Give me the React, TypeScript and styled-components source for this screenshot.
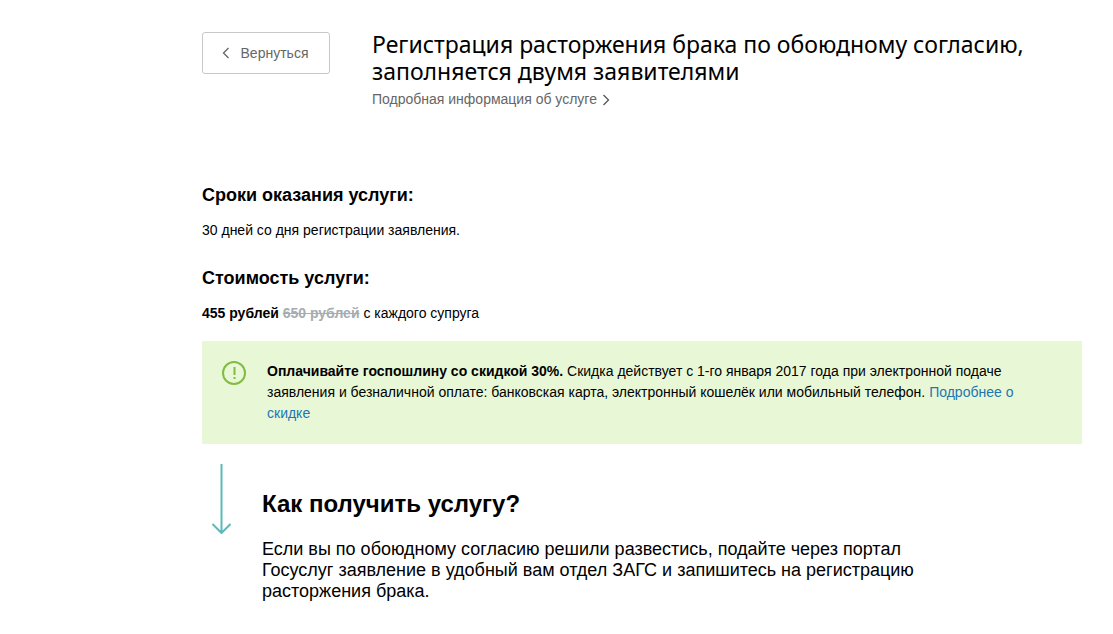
import React from 'react';
import styled, { createGlobalStyle } from 'styled-components';

const GlobalStyle = createGlobalStyle`
  * { box-sizing: border-box; }
  body {
    margin: 0;
    background: #fff;
    color: #000;
    font-family: "Liberation Sans", Arial, sans-serif;
    font-size: 14px;
    line-height: 21px;
  }
  h1, h2, p { margin: 0; }
`;

const Page = styled.div`
  padding: 31px 31px 32px 202px;
`;

const Header = styled.header`
  display: flex;
  align-items: flex-start;
  gap: 42px;
  margin-bottom: 74px;
`;

const BackButton = styled.button`
  flex: none;
  display: flex;
  align-items: center;
  justify-content: center;
  gap: 11px;
  width: 128px;
  height: 42px;
  margin-top: 1px;
  padding: 0 2px 0 0;
  border: 1px solid #c8c8c8;
  border-radius: 3px;
  background: #fff;
  color: #666;
  font: 14px "Liberation Sans", Arial, sans-serif;
  cursor: pointer;
`;

const Title = styled.h1`
  font: 400 23px/27px "Noto Sans", sans-serif;
`;

const InfoLink = styled.a`
  display: inline-flex;
  align-items: center;
  gap: 5px;
  margin-top: 4px;
  color: #666;
  text-decoration: none;
`;

const Section = styled.section`
  margin-bottom: 26px;
`;

const SectionTitle = styled.h2`
  margin-bottom: 14px;
  font-size: 18px;
  line-height: 22px;
`;

const OldPrice = styled.s`
  color: #a5adb2;
  font-weight: 700;
`;

const Notice = styled.aside`
  display: flex;
  gap: 21px;
  margin-top: 17px;
  padding: 20px 40px 20px 20px;
  background: #e8f8d7;
`;

const NoticeLink = styled.a`
  color: #1d75b3;
  text-decoration: none;
`;

const Steps = styled.section`
  display: flex;
  gap: 31px;
  padding: 20px 0 0 9px;
`;

const StepsTitle = styled.h2`
  margin: 24px 0 19px;
  font-size: 24px;
  line-height: 32px;
`;

const StepsText = styled.p`
  max-width: 660px;
  font-size: 18px;
  line-height: 21px;
`;

const Icon = styled.svg`
  flex: none;
  fill: none;
`;

export default function App() {
  return (
    <>
      <GlobalStyle />
      <Page>
        <Header>
          <BackButton type="button">
            <Icon width="8" height="12" viewBox="0 0 8 12" stroke="#666" strokeWidth="1.3">
              <path d="M6.5 1 1.5 6l5 5" />
            </Icon>
            Вернуться
          </BackButton>
          <div>
            <Title>Регистрация расторжения брака по обоюдному согласию, заполняется двумя заявителями</Title>
            <InfoLink href="#info">
              Подробная информация об услуге
              <Icon width="8" height="12" viewBox="0 0 8 12" stroke="#555" strokeWidth="1.3">
                <path d="m1.5 1 5 5-5 5" />
              </Icon>
            </InfoLink>
          </div>
        </Header>
        <main>
          <Section>
            <SectionTitle>Сроки оказания услуги:</SectionTitle>
            <p>30 дней со дня регистрации заявления.</p>
          </Section>
          <section>
            <SectionTitle>Стоимость услуги:</SectionTitle>
            <p>
              <b>455 рублей</b> <OldPrice>650 рублей</OldPrice> с каждого супруга
            </p>
          </section>
          <Notice>
            <Icon width="24" height="24" viewBox="0 0 24 24" stroke="#82bc42" strokeWidth="2">
              <circle cx="12" cy="12" r="11" />
              <path d="M12.5 6v8M12.5 16v2" />
            </Icon>
            <p>
              <b>Оплачивайте госпошлину со скидкой 30%.</b> Скидка действует с 1-го января 2017 года при
              электронной подаче заявления и безналичной оплате: банковская карта, электронный кошелёк или
              мобильный телефон. <NoticeLink href="#discount">Подробнее о скидке</NoticeLink>
            </p>
          </Notice>
          <Steps>
            <Icon width="20" height="70" viewBox="0 0 20 70" stroke="#5bbab8" strokeWidth="2">
              <path d="M10.5 0v68M1.5 60l9 9 9-9" />
            </Icon>
            <div>
              <StepsTitle>Как получить услугу?</StepsTitle>
              <StepsText>
                Если вы по обоюдному согласию решили развестись, подайте через портал Госуслуг заявление в
                удобный вам отдел ЗАГС и запишитесь на регистрацию расторжения брака.
              </StepsText>
            </div>
          </Steps>
        </main>
      </Page>
    </>
  );
}
